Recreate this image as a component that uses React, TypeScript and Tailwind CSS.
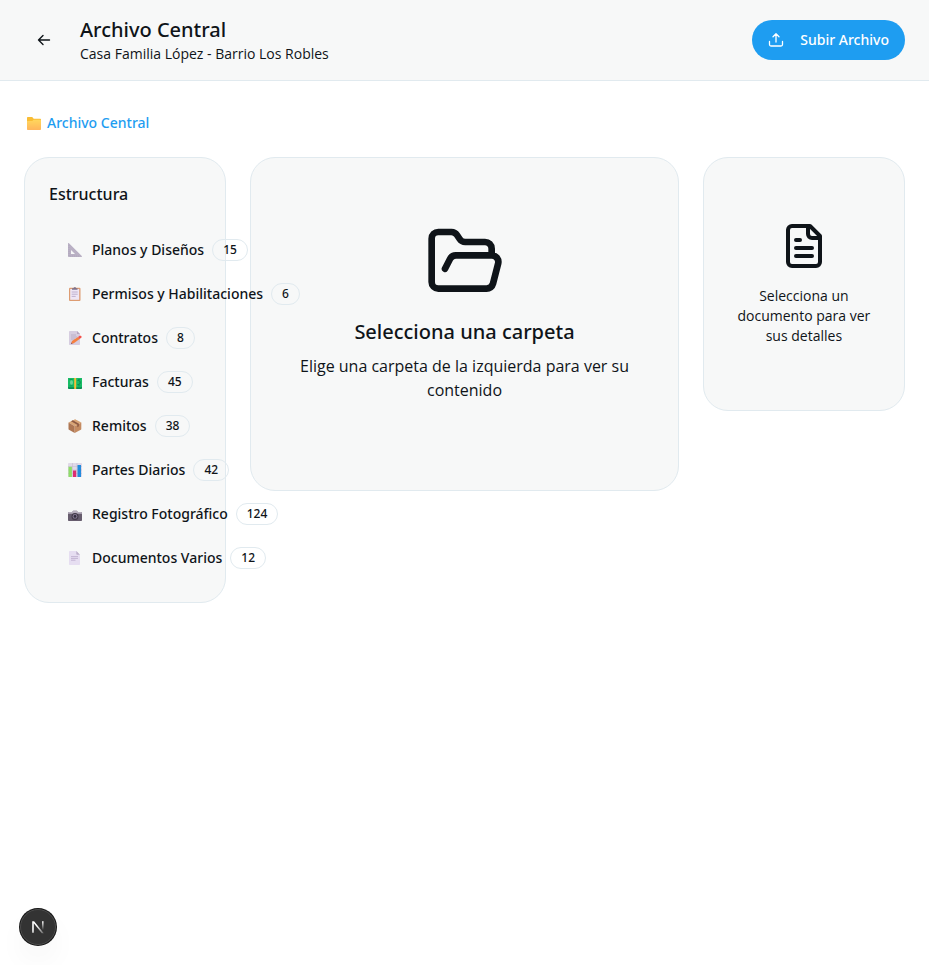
import type { ReactNode } from "react";

type Folder = { name: string; count: number; icon: ReactNode };

function Glyph({ children }: { children: ReactNode }) {
  return (
    <svg viewBox="0 0 14 14" className="mr-0.5 ml-[3px] size-3.5 shrink-0" aria-hidden="true">
      {children}
    </svg>
  );
}

const folders: Folder[] = [
  {
    name: "Planos y Diseños",
    count: 15,
    icon: (
      <Glyph>
        <path fillRule="evenodd" d="M0 .5C0 0 .6-.2 1 .2L13.8 13c.4.4.2 1-.4 1H.7c-.4 0-.7-.3-.7-.7V.5ZM3 7v4h4L3 7Z" fill="#b9b0c4" />
        <path d="M1 2v11h11" fill="none" stroke="#a79eb4" strokeWidth=".5" strokeDasharray="1 1" />
      </Glyph>
    ),
  },
  {
    name: "Permisos y Habilitaciones",
    count: 6,
    icon: (
      <Glyph>
        <rect x="1" y=".8" width="11.5" height="13.2" rx="1" fill="#dd9c72" />
        <rect x="2.2" y="2" width="9" height="10.8" fill="#eee6f5" />
        <path d="M4 2.8V1.2h1.5L6 .2h1.6l.5 1H9.5v1.6Z" fill="#7d7189" />
        <path d="M3.7 5h6M3.7 7.2h6M3.7 9.4h4" stroke="#b9a9c9" strokeWidth=".9" />
      </Glyph>
    ),
  },
  {
    name: "Contratos",
    count: 8,
    icon: (
      <Glyph>
        <path d="M1 .7c0-.4.3-.7.7-.7H9l3 3v10.3c0 .4-.3.7-.7.7H1.7c-.4 0-.7-.3-.7-.7V.7Z" fill="#d6cde0" />
        <path d="M9 0v3h3Z" fill="#b4a6c0" />
        <path d="M3 4h5M3 6h6M3 8h4" stroke="#b5a7c1" strokeWidth=".8" />
        <path d="m3 13 1-3 6-4 1.6 2-5.8 4.3Z" fill="#f5803f" />
        <path d="m10 6 1.8-1.2c1.3-.5 2.4 1 1.4 1.9L11.6 8Z" fill="#f4514b" />
        <path d="m3 13 .5-1.5 1 1Z" fill="#75465c" />
      </Glyph>
    ),
  },
  {
    name: "Facturas",
    count: 45,
    icon: (
      <Glyph>
        <rect y="3" width="14" height="11" rx=".8" fill="#078c52" />
        <rect y="3" width="14" height="9.2" rx=".8" fill="#18bd65" />
        <path d="M1.5 4.5h3.2M1.5 10.8h3.2M10 4.5h2.5M10 10.8h2.5" stroke="#079456" strokeWidth=".7" />
        <ellipse cx="3.5" cy="7.5" rx="1.5" ry="2.2" fill="#6bd795" />
        <path d="M9.5 5.5h1.2c2 0 2 4 0 4H9.5" fill="none" stroke="#087d4b" strokeWidth=".9" />
        <path d="M6.2 3h2v11h-2Z" fill="#fbbd35" />
      </Glyph>
    ),
  },
  {
    name: "Remitos",
    count: 38,
    icon: (
      <Glyph>
        <path d="m.5 3.5 6-3.1c.4-.2.8-.2 1.2 0l5.6 3-6.6 3.8Z" fill="#d9a576" />
        <path d="m.5 3.5 6.2 3.7V14L1 10.8c-.3-.2-.5-.5-.5-.9Z" fill="#ad7653" />
        <path d="m6.7 7.2 6.6-3.8v6.5c0 .4-.2.7-.5.9L6.7 14Z" fill="#c48b61" />
        <path d="m3 2.2 6.3 3.5v2.5l1.6-.9V4.8L4.8 1.3Z" fill="#8e5b44" />
      </Glyph>
    ),
  },
  {
    name: "Partes Diarios",
    count: 42,
    icon: (
      <Glyph>
        <rect width="14" height="14" rx=".8" fill="#e0d9e8" />
        <path d="M0 3.5h14M0 7h14M0 10.5h14M4.5 0v14M9 0v14" stroke="#c2b8cd" strokeWidth=".5" />
        <path d="M.5 3.8h3.4V14H.5Z" fill="#8fdd68" />
        <path d="M5 7.5h3.2V14H5Z" fill="#dc2d70" />
        <path d="M9.5 2H13v12H9.5Z" fill="#238bdc" />
      </Glyph>
    ),
  },
  {
    name: "Registro Fotográfico",
    count: 124,
    icon: (
      <Glyph>
        <path d="M0 5.9c0-.5.3-.8.8-.8h3.4l1-1.4h3.6l1 1.4h3.4c.5 0 .8.3.8.8v7.3c0 .5-.3.8-.8.8H.8c-.5 0-.8-.3-.8-.8Z" fill="#675d6e" />
        <path d="M0 6.7v-.8c0-.5.3-.8.8-.8h3.4l1-1.4h3.6l1 1.4h3.4c.5 0 .8.3.8.8v.8Z" fill="#b7afbd" />
        <circle cx="7" cy="9.4" r="3.5" fill="#423a48" />
        <circle cx="7" cy="9.4" r="2.4" fill="#82768f" />
        <circle cx="7" cy="9.4" r="1.3" fill="#312b3b" />
      </Glyph>
    ),
  },
  {
    name: "Documentos Varios",
    count: 12,
    icon: (
      <Glyph>
        <path d="M1 .7c0-.4.3-.7.7-.7H8.3L12 3.7v9.6c0 .4-.3.7-.7.7H1.7c-.4 0-.7-.3-.7-.7Z" fill="#e6def1" />
        <path d="M8.3 0v3c0 .4.3.7.7.7h3Z" fill="#bdb0ca" />
        <path d="M3 5.6h7M3 7.4h7M3 9.2h4.5" stroke="#baa9cb" strokeWidth=".8" />
      </Glyph>
    ),
  },
];

function FolderOpenIcon() {
  return (
    <svg viewBox="0 0 24 24" className="size-20" fill="none" stroke="currentColor" strokeWidth="2" strokeLinecap="round" strokeLinejoin="round" aria-hidden="true">
      <path d="m6 14 1.5-2.9A2 2 0 0 1 9.24 10H20a2 2 0 0 1 1.94 2.5l-1.54 6a2 2 0 0 1-1.95 1.5H4a2 2 0 0 1-2-2V5a2 2 0 0 1 2-2h3.9a2 2 0 0 1 1.69.9l.81 1.2a2 2 0 0 0 1.67.9H18a2 2 0 0 1 2 2v2" />
    </svg>
  );
}

function DocumentIcon() {
  return (
    <svg viewBox="0 0 24 24" className="size-12" fill="none" stroke="currentColor" strokeWidth="2" strokeLinecap="round" strokeLinejoin="round" aria-hidden="true">
      <path d="M15 2H6a2 2 0 0 0-2 2v16a2 2 0 0 0 2 2h12a2 2 0 0 0 2-2V7Z" />
      <path d="M14 2v4a2 2 0 0 0 2 2h4" />
      <path d="M10 9H8M16 13H8M16 17H8" />
    </svg>
  );
}

export default function App() {
  return (
    <div className="min-h-screen bg-white font-['Open_Sans','Noto_Sans',sans-serif] text-[#0f1419]">
      <header className="flex items-center justify-between border-b border-[#e1eaef] bg-[#f7f8f8] px-6 py-4">
        <div className="flex items-center gap-4">
          <button type="button" aria-label="Volver" className="flex size-10 items-center justify-center rounded-full">
            <svg viewBox="0 0 16 16" className="size-4" fill="none" stroke="currentColor" strokeWidth="1.4" strokeLinecap="round" strokeLinejoin="round" aria-hidden="true">
              <path d="M13.5 8h-11M7 3.5 2.5 8 7 12.5" />
            </svg>
          </button>
          <div>
            <h1 className="font-['Noto_Sans',sans-serif] text-xl font-medium">Archivo Central</h1>
            <p className="text-sm">Casa Familia López - Barrio Los Robles</p>
          </div>
        </div>
        <button type="button" className="flex h-10 items-center gap-4 rounded-full bg-[#1e9df1] px-4 font-['Noto_Sans',sans-serif] text-sm font-medium text-white">
          <svg viewBox="0 0 16 16" className="size-4" fill="none" stroke="currentColor" strokeWidth="1.3" strokeLinecap="round" strokeLinejoin="round" aria-hidden="true">
            <path d="M8 10V2M5 4.8l3-3 3 3M1.5 9.5v3c0 .8.7 1.5 1.5 1.5h10c.8 0 1.5-.7 1.5-1.5v-3" />
          </svg>
          Subir Archivo
        </button>
      </header>

      <main className="p-6">
        <nav aria-label="Ruta" className="mb-4 flex h-9 items-center">
          <a href="#" className="flex items-center gap-1 font-['Noto_Sans',sans-serif] text-sm font-medium text-[#1e9df1]">
            <Glyph>
              <defs>
                <linearGradient id="folder-front" x1="0" y1="0" x2="0" y2="1">
                  <stop offset="0" stopColor="#ffd75c" />
                  <stop offset="1" stopColor="#ffb55c" />
                </linearGradient>
              </defs>
              <path d="M0 2c0-.6.4-1 1-1h4.2l1.5 1.8H13c.6 0 1 .4 1 1V8H0Z" fill="#f9bd35" />
              <path d="M0 5h5.2l1.5-1.2H13c.6 0 1 .4 1 1V13c0 .6-.4 1-1 1H1c-.6 0-1-.4-1-1Z" fill="url(#folder-front)" />
            </Glyph>
            Archivo Central
          </a>
        </nav>

        <div className="grid grid-cols-4 items-start gap-6">
          <aside className="relative z-10 min-w-0 rounded-[25px] border border-[#e1eaef] bg-[#f7f8f8] p-6">
            <h2 className="mb-6 font-['Noto_Sans',sans-serif] text-base font-medium">Estructura</h2>
            <ul className="flex flex-col gap-1">
              {folders.map((folder) => (
                <li key={folder.name}>
                  <button type="button" className="flex h-10 w-full items-center gap-2 px-4 font-['Noto_Sans',sans-serif] text-sm font-medium whitespace-nowrap">
                    {folder.icon}
                    <span>{folder.name}</span>
                    <span className="rounded-full border border-[#e1eaef] px-2.5 py-0.5 text-xs">{folder.count}</span>
                  </button>
                </li>
              ))}
            </ul>
          </aside>

          <section className="col-span-2 flex flex-col items-center rounded-[25px] border border-[#e1eaef] bg-[#f7f8f8] px-6 pt-16 pb-22 text-center">
            <FolderOpenIcon />
            <h2 className="mt-4 mb-2 font-['Noto_Sans',sans-serif] text-xl font-medium">Selecciona una carpeta</h2>
            <p className="text-base">Elige una carpeta de la izquierda para ver su contenido</p>
          </section>

          <section className="flex flex-col items-center rounded-[25px] border border-[#e1eaef] bg-[#f7f8f8] px-6 py-16 text-center">
            <DocumentIcon />
            <p className="mt-4 text-sm">Selecciona un documento para ver sus detalles</p>
          </section>
        </div>
      </main>

      <button
        type="button"
        aria-label="Herramientas de desarrollo"
        className="fixed bottom-5 left-5 flex size-9 items-center justify-center rounded-full border border-[#4b4b4b] bg-[#333333] shadow-[0_0_0_1px_#171717,0_16px_32px_-8px_rgba(0,0,0,0.12)]"
      >
        <svg viewBox="0 0 14 14" className="size-3.5" fill="none" aria-hidden="true">
          <defs>
            <linearGradient id="mark-diagonal" x1="6" y1="6" x2="12" y2="13" gradientUnits="userSpaceOnUse">
              <stop stopColor="#fff" />
              <stop offset="1" stopColor="#fff" stopOpacity=".3" />
            </linearGradient>
            <linearGradient id="mark-stem" x1="0" y1="1" x2="0" y2="10" gradientUnits="userSpaceOnUse">
              <stop stopColor="#fff" />
              <stop offset="1" stopColor="#fff" stopOpacity="0" />
            </linearGradient>
          </defs>
          <path d="M1.2 1.2h1.9l9.7 12h-2L2.8 3.2v9.6H1.2Z" fill="url(#mark-diagonal)" />
          <path d="M11 1.2h1.6v9H11Z" fill="url(#mark-stem)" />
        </svg>
      </button>
    </div>
  );
}
